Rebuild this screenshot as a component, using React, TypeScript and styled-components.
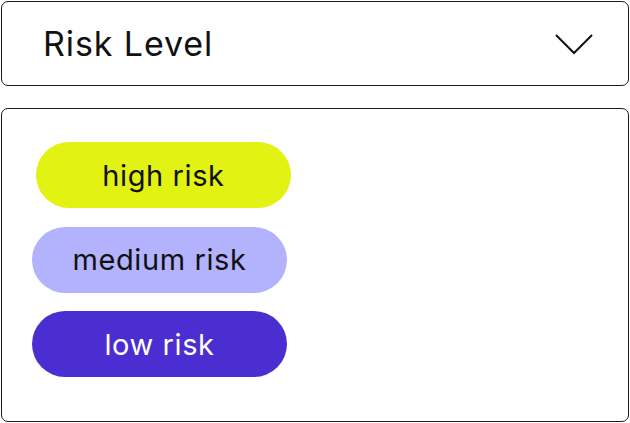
import styled, { createGlobalStyle } from 'styled-components';

const GlobalStyle = createGlobalStyle`
  html, body {
    margin: 0;
    padding: 0;
    background: #ffffff;
  }
  body {
    font-family: Inter, "Noto Sans", sans-serif;
  }
`;

type Level = {
  label: string;
  bg: string;
  color: string;
  shift?: number;
};

const levels: Level[] = [
  { label: 'high risk', bg: '#e2f212', color: '#111111', shift: 4 },
  { label: 'medium risk', bg: '#b3b2fc', color: '#111111' },
  { label: 'low risk', bg: '#4b2ed1', color: '#ffffff' },
];

const Page = styled.div`
  width: 630px;
  height: 423px;
  padding: 1px;
  box-sizing: border-box;
  display: flex;
  flex-direction: column;
  gap: 22px;
`;

const Select = styled.div`
  height: 85px;
  box-sizing: border-box;
  border: 1px solid #1a1a1a;
  border-radius: 7px;
  display: flex;
  align-items: center;
  justify-content: space-between;
  padding: 0 34px 0 41px;
`;

const Title = styled.span`
  font-size: 34px;
  font-weight: 400;
  color: #111111;
  letter-spacing: 0.9px;
`;

const Panel = styled.div`
  flex: 1;
  box-sizing: border-box;
  border: 1px solid #1a1a1a;
  border-radius: 7px;
  padding: 33px 0 0 30px;
  display: flex;
  flex-direction: column;
  gap: 18.5px;
`;

const Pill = styled.div<{ $bg: string; $color: string; $shift: number }>`
  width: 255px;
  height: 66px;
  border-radius: 33px;
  background: ${(p) => p.$bg};
  color: ${(p) => p.$color};
  margin-left: ${(p) => p.$shift}px;
  display: flex;
  align-items: center;
  justify-content: center;
  font-size: 29px;
  font-weight: 400;
  letter-spacing: 0.6px;
`;

const Chevron = () => (
  <svg width="40" height="22" viewBox="0 0 40 22" fill="none">
    <path d="M2 2 L20 20 L38 2" stroke="#111" strokeWidth="2" />
  </svg>
);

export default function App() {
  return (
    <>
      <GlobalStyle />
      <Page>
        <Select>
          <Title>Risk Level</Title>
          <Chevron />
        </Select>
        <Panel>
          {levels.map((l) => (
            <Pill key={l.label} $bg={l.bg} $color={l.color} $shift={l.shift ?? 0}>
              {l.label}
            </Pill>
          ))}
        </Panel>
      </Page>
    </>
  );
}
